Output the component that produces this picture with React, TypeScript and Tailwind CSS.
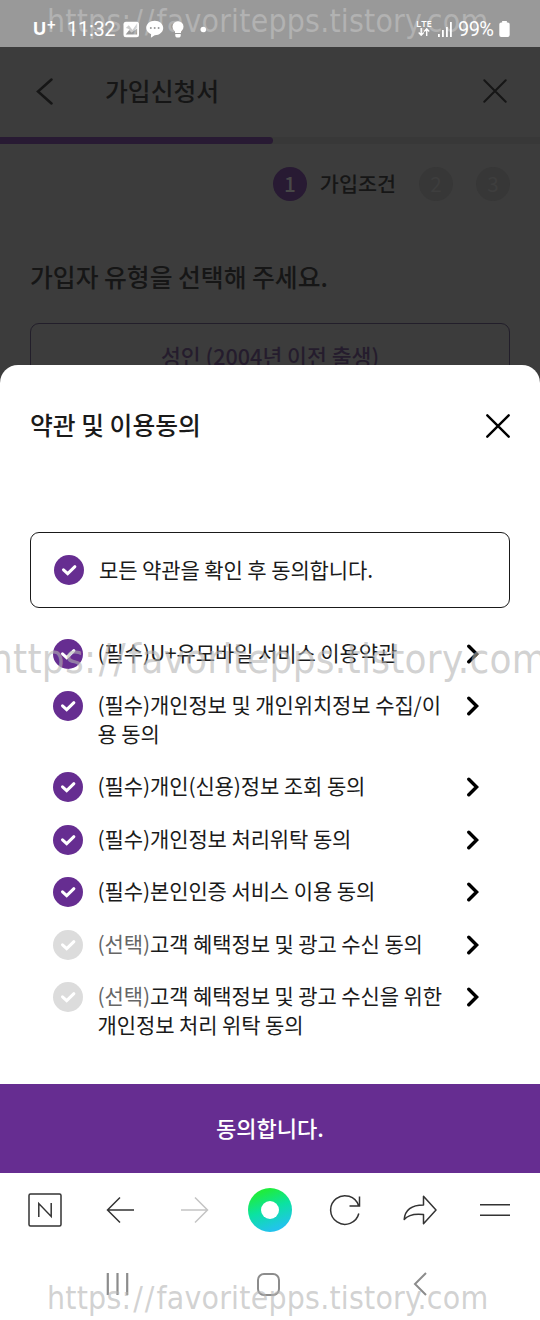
import React from 'react';

type ITerm = {
  label: string;
  text: string;
  checked: boolean;
};

const terms: ITerm[] = [
  { label: '(필수)', text: 'U+유모바일 서비스 이용약관', checked: true },
  { label: '(필수)', text: '개인정보 및 개인위치정보 수집/이용 동의', checked: true },
  { label: '(필수)', text: '개인(신용)정보 조회 동의', checked: true },
  { label: '(필수)', text: '개인정보 처리위탁 동의', checked: true },
  { label: '(필수)', text: '본인인증 서비스 이용 동의', checked: true },
  { label: '(선택)', text: '고객 혜택정보 및 광고 수신 동의', checked: false },
  { label: '(선택)', text: '고객 혜택정보 및 광고 수신을 위한 개인정보 처리 위탁 동의', checked: false },
];

const CheckCircle = ({ checked }: { checked: boolean }) => {
  return (
    <svg
      className={`size-[30px] shrink-0 ${checked ? 'text-[#662d91]' : 'text-[#dcdcdc]'}`}
      viewBox="0 0 30 30"
      fill="none"
    >
      <circle cx="15" cy="15" r="15" fill="currentColor" />
      <path d="M9.5 14.8l4.2 3.8 7.2-6.9" stroke="#fff" strokeWidth="3" strokeLinecap="round" />
    </svg>
  );
};

const CloseIcon = ({ className }: { className: string }) => {
  return (
    <svg className={`size-6 ${className}`} viewBox="0 0 24 24" fill="none" stroke="currentColor" strokeLinecap="round">
      <path d="M1.3 1.3l21.4 21.4M22.7 1.3L1.3 22.7" />
    </svg>
  );
};

const StatusBar = () => {
  return (
    <div className="flex h-[47px] items-center bg-[#999] pt-[11px] pr-[30px] pl-[33px] text-white">
      <span className="w-[34px] font-['Inter'] text-[18px] leading-5 font-bold">
        U<sup className="-top-1.5 text-[15px] leading-none font-semibold">+</sup>
      </span>
      <span className="w-[55px] font-['Roboto'] text-[20px] leading-5 tracking-[-0.3px]">11:32</span>
      <svg className="h-[18px] w-[84px]" viewBox="0 0 84 18" fill="currentColor">
        <rect x="1.5" y="1.7" width="15.5" height="15.5" rx="2.5" />
        <path d="M3.7 14.5l3.5-4.6 2.4 2.7 5.5-4v5.9z" fill="#999" />
        <path d="M3.8 8l3-2.7 3.7 4.7 4.6-6.4v4l-5 6-3.3-4.6z" fill="#999" opacity=".5" />
        <path d="M32.7.8c4.9 0 8.5 3.2 8.5 7.2s-3.6 7.2-8.5 7.2l-3.8 2.5.2-3.5C26 12.8 24.2 10.6 24.2 8c0-4 3.6-7.2 8.5-7.2z" />
        <g fill="#999">
          <circle cx="28.8" cy="8" r="1" />
          <circle cx="32.7" cy="8" r="1" />
          <circle cx="36.6" cy="8" r="1" />
        </g>
        <circle cx="56" cy="6.7" r="5.5" />
        <path d="M53 10h6v3h-6zM53.3 14h5.4v2.2l-1.2 1.3h-3l-1.2-1.3z" />
        <circle cx="81.3" cy="9.5" r="2.8" />
      </svg>
      <div className="ml-auto flex items-center">
        <div className="-mt-1 flex w-[22px] flex-col items-start font-['Open_Sans'] text-[9.5px] leading-[9px] font-semibold">
          <span>LTE</span>
          <svg className="ml-[2px] h-2 w-3" viewBox="0 0 12 8" fill="none" stroke="currentColor" strokeWidth="1.4">
            <path d="M3.2 0v7M.7 4.5l2.5 2.7 2.5-2.7M8.7 8V1M6.2 3.5L8.7.8l2.5 2.7" />
          </svg>
        </div>
        <svg className="h-[15px] w-[20px]" viewBox="0 0 20 15" fill="currentColor">
          <path d="M0 12h1.8v3H0zM4 8h1.8v7H4zM8 5h1.8v10H8zM12 0h1.800v15H12z" />
        </svg>
        <span className="w-[41px] font-['Roboto'] text-[20px] leading-5 tracking-[-0.6px]">99%</span>
        <svg className="h-[16px] w-[11px]" viewBox="0 0 11 17" fill="currentColor">
          <path d="M3 0h5v1.500h1a2 2 0 0 1 2 2V15a2 2 0 0 1-2 2H2a2 2 0 0 1-2-2V3.500a2 2 0 0 1 2-2h1z" />
        </svg>
      </div>
    </div>
  );
};

// 딤 처리된 가입신청서 화면
const ApplyForm = () => {
  return (
    <div className="h-[318px] overflow-hidden bg-[#3c3c3c] text-[#161616]">
      <header className="mb-[2px] flex h-[88px] items-center pr-[33px] pl-[36px]">
        <svg className="h-[27px] w-[17px]" viewBox="0 0 17 27" fill="none" stroke="currentColor" strokeWidth="2.5" strokeLinecap="round">
          <path d="M15.5 1.5L2 13.5l13.5 12" />
        </svg>
        <h1 className="-mt-[2px] ml-[52px] text-[24.8px] leading-9 font-medium">가입신청서</h1>
        <CloseIcon className="ml-auto stroke-[2]" />
      </header>
      <div className="h-[7px] bg-[#383838]">
        <div className="h-full w-[273px] rounded-r-full bg-[#281a33]" />
      </div>
      <div className="mt-[23px] flex h-[34px] items-center justify-end pr-[30px] text-[20.7px]">
        <span className="flex size-[34px] items-center justify-center rounded-full bg-[#281a33] font-medium text-[#484848]">1</span>
        <span className="mr-[23px] ml-[13px] font-medium">가입조건</span>
        <span className="mr-[23px] flex size-[34px] items-center justify-center rounded-full bg-[#373737] text-[#3e3e3e]">2</span>
        <span className="flex size-[34px] items-center justify-center rounded-full bg-[#373737] text-[#3e3e3e]">3</span>
      </div>
      <h2 className="mt-[57px] pl-[30px] text-[24.8px] leading-9 font-medium">
        가입자 유형을 선택해 주세요.
      </h2>
      <div className="mx-[30px] mt-[29px] flex h-[67px] items-center justify-center rounded-[9px] border-[1.5px] border-[#221e2a] text-[21.6px] font-medium text-[#251c2d]">
        성인 (2004년 이전 출생)
      </div>
    </div>
  );
};

const TermRow = ({ term }: { term: ITerm }) => {
  return (
    <li className="flex items-start">
      <CheckCircle checked={term.checked} />
      <p className="-mt-px ml-[15px] w-[352px] pb-[1.5px] text-[21px] leading-[29px] tracking-[-0.1px] break-all">
        <span className={term.checked ? '' : 'text-[#666]'}>{term.label}</span>
        {term.text}
      </p>
      <svg className="mt-[5px] ml-[17px] h-5 w-3" viewBox="0 0 12 20" fill="none" stroke="#000" strokeWidth="3.4">
        <path d="M1.8 2.2L9.6 10l-7.8 7.8" strokeLinecap="round" />
      </svg>
    </li>
  );
};

const BrowserBar = () => {
  return (
    <nav className="grid h-[74px] grid-cols-7 place-items-center px-[7.5px] text-[#333]">
      <svg className="size-[34px]" viewBox="0 0 34 34" fill="none" stroke="currentColor" strokeWidth="1.5">
        <rect x="1" y="1" width="32" height="32" rx="1.5" />
        <path d="M10.8 24V10.5L23.2 23.5V10" />
      </svg>
      <svg className="h-[28px] w-[28px]" viewBox="0 0 28 28" fill="none" stroke="currentColor" strokeWidth="1.5">
        <path d="M28 14H1.5M14 1.5L1.5 14 14 26.5" />
      </svg>
      <svg className="h-[28px] w-[28px]" viewBox="0 0 28 28" fill="none" stroke="#c4c4c4" strokeWidth="1.5">
        <path d="M0 14h26.5M14 1.5L26.5 14 14 26.5" />
      </svg>
      <div className="flex size-11 items-center justify-center rounded-full bg-linear-[160deg,#1fec3e_15%,#0be2a2_48%,#22c3ec_85%]">
        <span className="size-[18px] rounded-full bg-white" />
      </div>
      <svg className="h-[32px] w-[32px]" viewBox="0 0 32 32" fill="none" stroke="currentColor" strokeWidth="1.5">
        <path d="M29.5 11.5A14.3 14.3 0 1 0 29.8 19.5M30.5 2.5V12H20.5" />
      </svg>
      <svg className="h-[30px] w-[34px]" viewBox="0 0 34 30" fill="none" stroke="currentColor" strokeWidth="1.5" strokeLinejoin="round">
        <path d="M20.5 1.3L33 15 20.5 28.7V19.5C12 18.5 5 20 1.2 24.5 2 15 9 10 20.5 10z" />
      </svg>
      <svg className="h-3 w-[30px]" viewBox="0 0 30 12" stroke="currentColor" strokeWidth="1.5">
        <path d="M0 .8h30M0 11.2h30" />
      </svg>
    </nav>
  );
};

const SystemBar = () => {
  return (
    <div className="ml-[42px] grid h-[74px] w-[453px] grid-cols-3 place-items-center text-[#8c8c8c]">
      <svg className="h-6 w-[23px]" viewBox="0 0 23 24" fill="none" stroke="currentColor" strokeWidth="2.2">
        <path d="M1.8 1v22M11.5 1v22M21.2 1v22" />
      </svg>
      <span className="size-[23px] rounded-[7px] border-2 border-[#8c8c8c]" />
      <svg className="h-6 w-[14px]" viewBox="0 0 14 24" fill="none" stroke="currentColor" strokeWidth="2">
        <path d="M13 1L2 12l11 11" />
      </svg>
    </div>
  );
};

const Watermark = ({ className }: { className: string }) => {
  return (
    <div
      className={`pointer-events-none absolute font-['DejaVu_Sans_Condensed','DejaVu_Sans',sans-serif] tracking-[0.007em] [font-stretch:condensed] whitespace-nowrap ${className}`}
    >
      https<span className="tracking-[0.065em]">://</span>favoritepps.tistory.com
    </div>
  );
};

const App = () => {
  return (
    <div className="relative h-[1320px] w-[540px] overflow-hidden bg-white font-['Noto_Sans_CJK_KR',sans-serif]">
      <StatusBar />
      <ApplyForm />
      <div className="bg-[#3c3c3c]">
        <section className="h-[718.5px] rounded-t-[18px] bg-white px-[30px] text-[#1a1a1a]">
          <div className="flex h-[122px] items-center justify-between">
            <h2 className="-mt-[5px] text-[24.8px] leading-9 font-medium">약관 및 이용동의</h2>
            <CloseIcon className="stroke-[2.4] text-black" />
          </div>
          <div className="mt-[45px] flex h-[76px] items-center rounded-[9px] border-[1.5px] border-[#1a1a1a] pl-[23px]">
            <CheckCircle checked />
            <span className="-mt-[2px] ml-[15px] text-[21px] leading-[29px] tracking-[-0.1px]">모든 약관을 확인 후 동의합니다.</span>
          </div>
          <ul className="mt-[30.5px] flex flex-col gap-[22.5px] pl-[22.5px]">
            {terms.map((term) => (
              <TermRow key={term.text} term={term} />
            ))}
          </ul>
        </section>
      </div>
      <button className="flex h-[89.5px] w-full items-center justify-center bg-[#662d91] pb-[2px] text-[22px] font-medium text-white">
        동의합니다.
      </button>
      <BrowserBar />
      <SystemBar />
      <Watermark className="top-[1px] left-[47px] text-[31.7px] leading-[40px] text-white/25" />
      <Watermark className="top-[635px] left-[-10px] text-[40px] leading-[48px] text-[#b4b4b4]/60" />
      <Watermark className="top-[1278px] left-[47px] text-[31.7px] leading-[40px] text-[#b4b4b4]/60" />
    </div>
  );
};

export default App;
